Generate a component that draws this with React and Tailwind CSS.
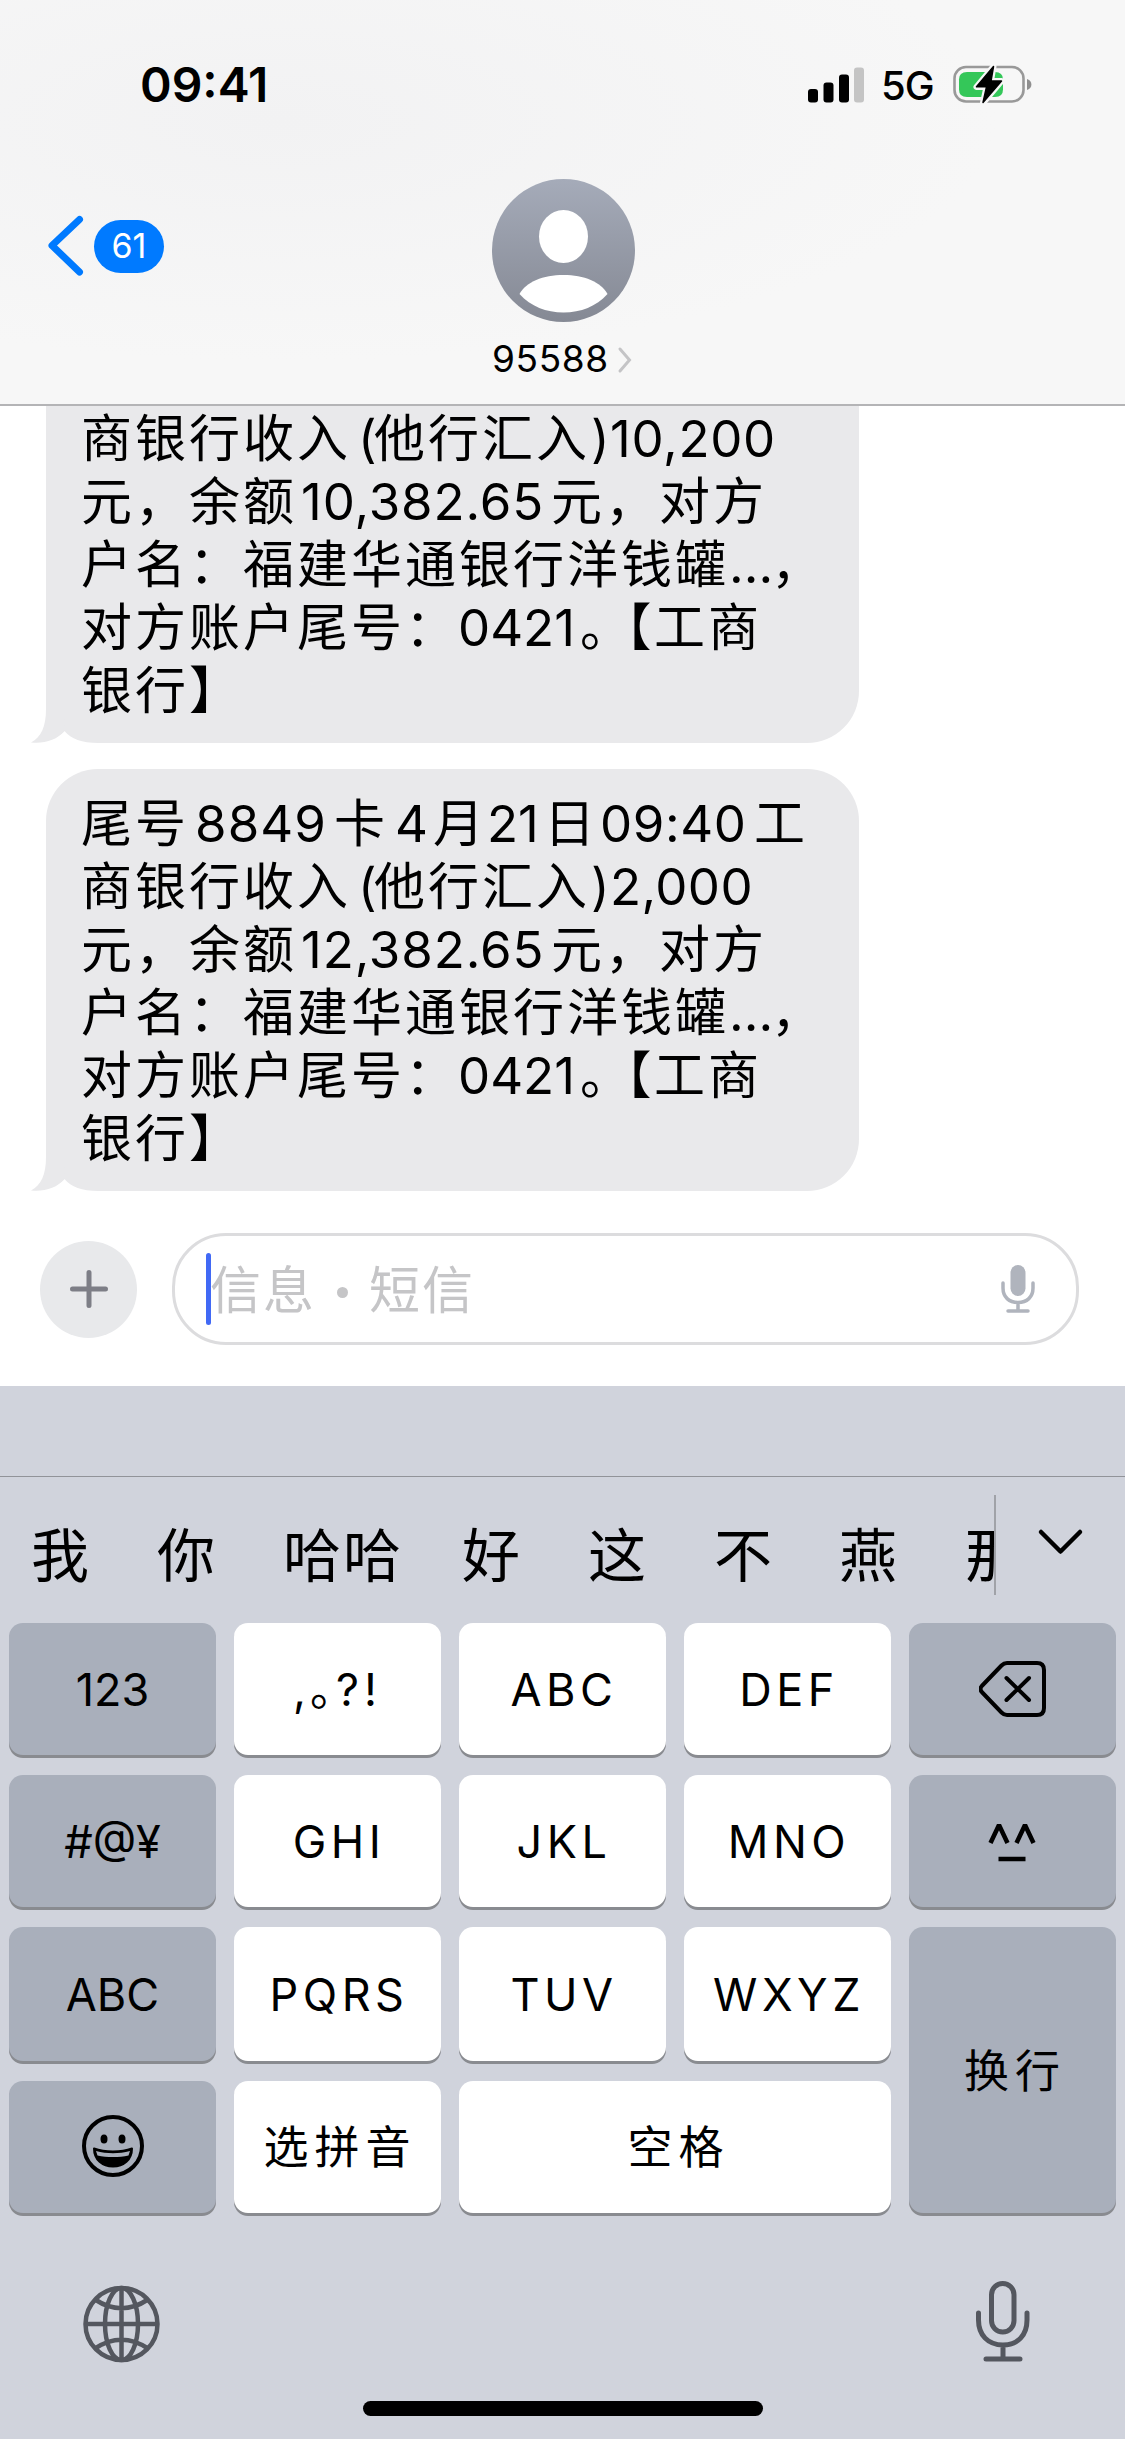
import React from 'react';
import { clsx } from 'clsx';

// Every line is a list of [text, classes] runs, latin runs get their own tracking
const firstMessage = [
  [['商银行收入', 'w-[277px]'], ['(', 'w-[16px]'], ['他行汇入', 'w-[217px]'], [')', 'w-[19px]'], ['10,200', 'w-[170px] tracking-[0.7px]']],
  [['元，余额', 'w-[220px]'], ['10,382.65', 'w-[250px] tracking-[0.9px]'], ['元，对方', 'w-[220px]']],
  [['户名：福建华通银行洋钱罐', 'w-[648px]'], ['...', 'w-[42px]'], ['，', 'w-[40px]']],
  [
    ['对方账户尾号：', 'w-[377px]'],
    ['0421', 'w-[122px]'],
    ['。', "w-[46px] [font-feature-settings:'halt']"],
    ['【', "w-[28px] [font-feature-settings:'halt']"],
    ['工商', 'w-[108px]'],
  ],
  [['银行】', 'w-[165px]']],
];

const secondMessage = [
  [
    ['尾号', 'w-[114px]'], ['8849', 'w-[139px] tracking-[1.1px]'], ['卡', 'w-[61px]'], ['4', 'w-[38px]'], ['月', 'w-[54px]'],
    ['21', 'w-[57px]'], ['日', 'w-[56px]'], ['09:40', 'w-[154px] tracking-[0.6px]'], ['工', 'w-[54px]'],
  ],
  [['商银行收入', 'w-[277px]'], ['(', 'w-[16px]'], ['他行汇入', 'w-[217px]'], [')', 'w-[19px]'], ['2,000', 'w-[170px] tracking-[0.4px]']],
  [['元，余额', 'w-[220px]'], ['12,382.65', 'w-[250px] tracking-[0.9px]'], ['元，对方', 'w-[220px]']],
  ...firstMessage.slice(2),
];

const candidates = [
  ['我', 'w-[126px]'],
  ['你', 'w-[126px]'],
  ['哈哈', 'w-[179px]'],
  ['好', 'w-[126px]'],
  ['这', 'w-[126px]'],
  ['不', 'w-[125px]'],
  ['燕', 'w-[126px]'],
  ['那', 'w-[60px]'],
];

const isLatin = (text) => /^[\x20-\x7f]+$/.test(text);

const StatusBar = () => (
  <div className="flex h-[168px] items-center pl-[140px] pr-[92px] pt-px">
    <span className="text-[48px] font-semibold leading-none">09:41</span>
    <div className="ml-auto flex items-center">
      <svg width="56" height="36" viewBox="0 0 56 36">
        <rect x="0" y="22" width="10" height="13.5" rx="3" fill="#000" />
        <rect x="15.5" y="15.5" width="10" height="20" rx="3" fill="#000" />
        <rect x="31" y="7.5" width="10" height="28" rx="3" fill="#000" />
        <rect x="46" y="0.5" width="10" height="35" rx="3" fill="#c4c4c4" />
      </svg>
      <span className="ml-[17px] mt-[3px] w-[54px] text-[40px] font-medium leading-none tracking-[-1px]">5G</span>
      <svg className="ml-[18px]" width="80" height="42" viewBox="0 0 80 42">
        <rect x="1.5" y="3" width="69" height="34.5" rx="11.5" fill="none" stroke="#999" strokeWidth="2.6" />
        <path d="M74 15c3.2 1.2 4.4 3 4.4 5.5s-1.2 4.3-4.4 5.5z" fill="#8f8f8f" />
        <path d="M14 8H42Q50 8 50 15.5V25.500Q50 33 42 33H14Q6 33 6 25.500V15.500Q6 8 14 8z" fill="#34c759" />
        <path
          d="M40.5 2.5L23.5 23H33.5L30 39L48.500 17H38z"
          fill="#000"
          stroke="#f7f7f7"
          strokeWidth="6"
          strokeLinejoin="round"
        />
        <path d="M40.5 2.5L23.5 22.800H33.500L30 38.500L48.500 17H38z" fill="#000" stroke="#000" strokeWidth="1.5" strokeLinejoin="round" />
      </svg>
    </div>
  </div>
);

const Header = () => (
  <header className="flex h-[406px] shrink-0 flex-col border-b-2 border-[#b4b4b6] bg-[#f7f7f7] bg-[radial-gradient(ellipse_at_25%_30%,#f2f2f3_0%,#f7f7f7_60%)]">
    <StatusBar />
    <div className="grid grid-cols-[492px_143px_1fr] items-start">
      <div className="flex items-center pl-[46px] pt-[46px]">
        <svg width="40" height="64" viewBox="0 0 40 64" fill="none" stroke="#007aff" strokeWidth="7" strokeLinecap="round" strokeLinejoin="round">
          <path d="M33.5 5.5L6 31.5L33.5 58" />
        </svg>
        <span className="ml-[8px] flex h-[53px] w-[70px] items-center justify-center rounded-full bg-[#007aff] text-[34px] leading-none text-white">
          61
        </span>
      </div>
      <div className="flex flex-col items-center pt-[11px]">
        <svg width="143" height="143" viewBox="0 0 143 143">
          <defs>
            <linearGradient id="avatar" x1="0" y1="0" x2="0" y2="1">
              <stop offset="0" stopColor="#a5abb9" />
              <stop offset="1" stopColor="#858994" />
            </linearGradient>
          </defs>
          <circle cx="71.5" cy="71.5" r="71.5" fill="url(#avatar)" />
          <ellipse cx="71.5" cy="57.5" rx="24.500" ry="26.5" fill="#fff" />
          <path d="M27.5 115C34 103 51 96 71.5 96S109 103 115.5 115C104 127.5 89 133.5 71.5 133.5S39 127.5 27.5 115z" fill="#fff" />
        </svg>
        <div className="mt-[18px] flex items-center self-start">
          <span className="w-[125px] text-[37px] leading-[38px] tracking-[0.6px]">95588</span>
          <svg className="mt-px shrink-0" width="16" height="28" viewBox="0 0 16 28" fill="none" stroke="#c4c4c6" strokeWidth="3" strokeLinecap="round">
            <path d="M3 3L12.5 14L3 25" />
          </svg>
        </div>
      </div>
    </div>
  </header>
);

const Bubble = ({ lines, className }) => (
  <div className={clsx('relative ml-[46px] w-[813px] shrink-0 bg-[#e9e9eb] pl-[35px]', className)}>
    {lines.map((line, i) => (
      <div key={i} className="flex h-[63px] whitespace-nowrap text-[51px] leading-[63px]">
        {line.map(([text, run], j) => (
          <span key={j} className={clsx('shrink-0', run, !isLatin(text) && 'tracking-[3px]')}>
            {text}
          </span>
        ))}
      </div>
    ))}
    {/* Tail */}
    <svg className="absolute bottom-0 left-[-16px]" width="70" height="34" viewBox="0 0 70 34">
      <path d="M0 34V33C14 34 27 30 34.5 22C41 30 52 34 68 34z" fill="#fff" />
      <path d="M16 0C16 18 11 28 1 33.500C14 35 27 31 34.500 22L34 8L18 0z" fill="#e9e9eb" />
    </svg>
  </div>
);

const Composer = () => (
  <div className="mt-[42px] flex items-center pl-[40px]">
    <div className="flex h-[97px] w-[97px] items-center justify-center rounded-full bg-[#e8e9eb]">
      <svg width="38" height="38" viewBox="0 0 38 38" stroke="#7d7e86" strokeWidth="5" strokeLinecap="round">
        <path d="M19 2.5V35.5M2.5 19H35.5" />
      </svg>
    </div>
    <div className="ml-[35px] flex h-[112px] w-[907px] items-center rounded-[54px] border-[3px] border-[#dcdcde] pl-[31px] pr-[41px]">
      <span className="h-[72px] w-[5px] rounded-full bg-[#4169f5]" />
      <span className="-ml-px mt-[2px] flex text-[51px] leading-none tracking-[2px] text-[#c5c5c7]">
        信息
        <span className="mx-[21px] mt-[22px] h-[11px] w-[11px] rounded-full bg-[#c5c5c7]" />
        短信
      </span>
      <svg className="ml-auto" width="34" height="50" viewBox="0 0 34 50" fill="none" stroke="#b0b4bd" strokeWidth="3.5" strokeLinecap="round">
        <rect x="9.5" y="1" width="15" height="31" rx="7.5" fill="#b0b4bd" stroke="none" />
        <path d="M2 19V24C2 33 8 38.5 17 38.5S32 33 32 24V19M17 39V46M7 47H27" />
      </svg>
    </div>
  </div>
);

const Key = ({ children, dark, className }) => (
  <div
    className={clsx(
      'flex items-center justify-center whitespace-nowrap rounded-[14px] text-[45px] leading-none shadow-[0_3px_0_#898b90]',
      dark ? 'bg-[#a9afbb]' : 'bg-white',
      className
    )}
  >
    {children}
  </div>
);

const Letters = ({ children }) => <Key className="pl-[3px] tracking-[4.5px]">{children}</Key>;

const Keypad = () => (
  <div className="grid grid-cols-5 grid-rows-[132px_132px_134px_132px] gap-x-[18px] gap-y-[20px] px-[9px]">
    <Key dark>123</Key>
    <Key className="tracking-[5px]">
      <span className="w-[17px]">,</span>
      <span className="w-[26px] tracking-normal [font-feature-settings:'halt']">。</span>
      <span>?!</span>
    </Key>
    <Letters>ABC</Letters>
    <Letters>DEF</Letters>
    <Key dark>
      <svg width="68" height="58" viewBox="0 0 68 58" fill="none" stroke="#000" strokeWidth="4" strokeLinecap="round" strokeLinejoin="round">
        <path d="M28 3H58Q65 3 65 10V48Q65 55 58 55H28Q25 55 22.5 52.500L2.800 32Q0.200 29 2.800 26L22.500 5.500Q25 3 28 3" />
        <path d="M27.5 18L50 40M50 18L27.5 40" />
      </svg>
    </Key>

    <Key dark>#@¥</Key>
    <Letters>GHI</Letters>
    <Letters>JKL</Letters>
    <Letters>MNO</Letters>
    <Key dark className="pr-[2px] pt-[3px]">
      <svg width="48" height="40" viewBox="0 0 48 40" fill="none" stroke="#000" strokeWidth="4.5" strokeLinejoin="bevel">
        <path d="M2.5 20L11 2L19.500 20M28.500 20L37 2L45.500 20M10.500 36H37.500" />
      </svg>
    </Key>

    <Key dark>ABC</Key>
    <Letters>PQRS</Letters>
    <Letters>TUV</Letters>
    <Letters>WXYZ</Letters>
    <Key dark className="row-span-2 pl-[5px] pt-[2px] tracking-[6px]">换行</Key>

    <Key dark className="pb-[2px]">
      <svg width="64" height="64" viewBox="0 0 64 64" fill="none" stroke="#000" strokeWidth="4">
        <circle cx="32" cy="32" r="29" />
        <ellipse cx="23" cy="25" rx="3.5" ry="4.5" fill="#000" stroke="none" />
        <ellipse cx="41" cy="25" rx="3.500" ry="4.500" fill="#000" stroke="none" />
        <path d="M13 34.500C24 38.500 40 38.500 51 34.500C51 46 42.500 52.500 32 52.500S13 46 13 34.500z" fill="#000" stroke="#000" strokeWidth="2" strokeLinejoin="round" />
        <path d="M15 37C26 40 38 40 49 37L47.500 41.500C38 43.500 26 43.500 16.500 41.500z" fill="#a9afbb" stroke="none" />
      </svg>
    </Key>
    <Key className="pl-[5px] tracking-[6px]">选拼音</Key>
    <Key className="col-span-2 pl-[7px] tracking-[6px]">空格</Key>
  </div>
);

const Keyboard = () => (
  <div className="mt-[41px] flex h-[1053px] flex-col bg-[#d0d3dc]">
    <div className="h-[90px]" />
    <div className="flex h-[147px] border-t border-[#919399] pt-[18px]">
      <div className="flex h-[100px] w-[996px] items-center overflow-hidden border-r-2 border-[#a0a2a8] pl-[31px] pt-[21px] text-[58px] leading-none tracking-[2px]">
        {candidates.map(([word, width]) => (
          <span key={word} className={clsx('shrink-0', width)}>{word}</span>
        ))}
      </div>
      <svg className="ml-[41px] mt-[32px]" width="48" height="28" viewBox="0 0 48 28" fill="none" stroke="#000" strokeWidth="4.5" strokeLinecap="round" strokeLinejoin="round">
        <path d="M4 5L23.5 24.5L43 5" />
      </svg>
    </div>
    <Keypad />
    <div className="flex items-start justify-between pl-[81px] pr-[93px] pt-[66px]">
      <svg className="mt-[4px]" width="80" height="82" viewBox="0 0 80 82" fill="none" stroke="#54575f" strokeWidth="4.5">
        <circle cx="40.500" cy="41" r="36" />
        <ellipse cx="40.500" cy="41" rx="16.500" ry="36" />
        <path d="M40.500 5V77M4.500 41H76.500M14 16.500Q40.500 34 67 16.500M14 65.500Q40.500 48 67 65.500" />
      </svg>
      <svg width="58" height="86" viewBox="0 0 58 86" fill="none" stroke="#54575f" strokeWidth="5" strokeLinecap="round">
        <rect x="17.500" y="4.500" width="22.500" height="48.500" rx="11.200" />
        <path d="M4.500 34V41C4.500 56 14 66 29 66S53 56 53 41V34M29 66V79M12 80H46" />
      </svg>
    </div>
    <div className="mx-auto mb-[23px] mt-auto h-[15px] w-[400px] rounded-full bg-black" />
  </div>
);

const App = () => (
  <div className="flex h-[2439px] w-[1125px] flex-col overflow-hidden bg-white font-['Inter','Noto_Sans_CJK_SC',sans-serif] text-black">
    <Header />
    <Bubble lines={firstMessage} className="h-[337px] rounded-br-[52px] pt-px" />
    <Bubble lines={secondMessage} className="mt-[26px] h-[422px] rounded-[52px] rounded-bl-none pt-[23px]" />
    <Composer />
    <Keyboard />
  </div>
);

export default App;
